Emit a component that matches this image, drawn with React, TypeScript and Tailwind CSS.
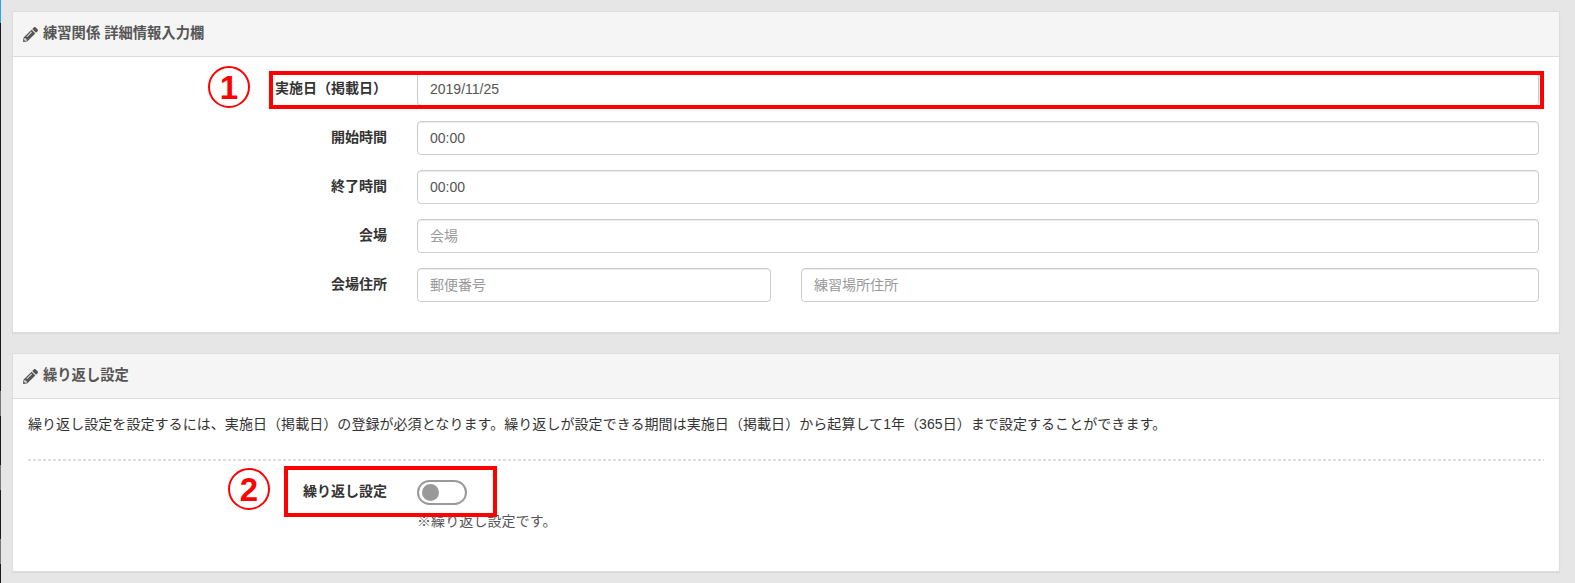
import React from "react";
import { FaPencilAlt } from "react-icons/fa";

const font = "[font-family:'Liberation_Sans','Noto_Sans_CJK_JP',sans-serif]";

function Input({ value, placeholder, className = "" }: { value?: string; placeholder?: string; className?: string }) {
  return (
    <input
      readOnly
      value={value}
      placeholder={placeholder}
      className={`h-[34px] min-w-0 rounded-[4px] border border-[#ccc] bg-white px-3 text-[14px] text-[#555] placeholder:text-[#999] shadow-[inset_0_1px_1px_rgba(0,0,0,0.075)] outline-none ${className}`}
    />
  );
}

function Row({ label, children, last }: { label: string; children: React.ReactNode; last?: boolean }) {
  return (
    <div className={`flex items-center ${last ? "" : "mb-[15px]"}`}>
      <label className="w-[374px] shrink-0 pb-[2px] text-right text-[14px] font-bold text-[#333]">{label}</label>
      <div className="ml-[30px] mr-[20px] flex flex-1 gap-[30px]">{children}</div>
    </div>
  );
}

function Panel({ title, children, className = "" }: { title: string; children: React.ReactNode; className?: string }) {
  return (
    <section className={`border border-[#ddd] bg-white shadow-[0_1px_1px_rgba(0,0,0,0.05)] ${className}`}>
      <h2 className="flex h-[45px] items-center gap-[5px] border-b border-[#ddd] bg-[#f5f5f5] pl-[10px] text-[14.3px] font-bold text-[#555]">
        <FaPencilAlt className="h-[15px] w-[15px] text-[#555]" />
        {title}
      </h2>
      {children}
    </section>
  );
}

function Mark({ n, className }: { n: string; className: string }) {
  return (
    <div className={`absolute flex h-[42px] w-[42px] items-center justify-center rounded-full border-2 border-[#f00] text-[33px] font-bold leading-none text-[#f00] ${className}`}>
      {n}
    </div>
  );
}

export default function App() {
  return (
    <div className={`relative h-[583px] w-[1575px] overflow-hidden bg-[#e6e6e6] pl-[12px] pr-[15px] pt-[11px] ${font}`}>
      <div className="absolute left-0 top-0 h-[23px] w-px bg-[#2ea3f2]" />
      <div className="absolute left-0 top-[23px] h-[560px] w-px bg-[#1a1a1a]" />
      {[391, 465, 539].map((y) => (
        <div key={y} className="absolute left-0 h-[25px] w-px bg-[#777]" style={{ top: y }} />
      ))}

      <Panel title="練習関係 詳細情報入力欄" className="h-[322px]">
        <div className="pt-[15px]">
          <Row label="実施日（掲載日）">
            <Input value="2019/11/25" className="flex-1" />
          </Row>
          <Row label="開始時間">
            <Input value="00:00" className="flex-1" />
          </Row>
          <Row label="終了時間">
            <Input value="00:00" className="flex-1" />
          </Row>
          <Row label="会場">
            <Input placeholder="会場" className="flex-1" />
          </Row>
          <Row label="会場住所" last>
            <Input placeholder="郵便番号" className="w-[354px]" />
            <Input placeholder="練習場所住所" className="flex-1" />
          </Row>
        </div>
      </Panel>

      <Panel title="繰り返し設定" className="mt-[20px] h-[219px]">
        <p className="mx-[15px] mt-[15px] text-[14px] leading-[20px] tracking-[0.06px] text-[#333]">
          繰り返し設定を設定するには、実施日（掲載日）の登録が必須となります。繰り返しが設定できる期間は実施日（掲載日）から起算して1年（365日）まで設定することができます。
        </p>
        <div className="mx-[15px] mt-[25px] h-[2px] bg-[repeating-linear-gradient(90deg,#ddd_0,#ddd_3px,transparent_3px,transparent_5px)]" />
        <div className="mt-[19px] flex items-center">
          <span className="w-[374px] pb-[2px] text-right text-[14px] font-bold text-[#333]">繰り返し設定</span>
          <span className="ml-[30px] flex h-[25px] w-[50px] items-center rounded-full border-2 border-[#999] bg-white pl-[3px]">
            <span className="h-[17px] w-[17px] rounded-full bg-[#999]" />
          </span>
        </div>
        <p className="ml-[404px] mt-[6px] text-[14px] leading-[20px] tracking-[0.1px] text-[#555]">※繰り返し設定です。</p>
      </Panel>

      <div className="absolute left-[269px] top-[71px] h-[38px] w-[1275px] border-4 border-[#f00]" />
      <div className="absolute left-[284px] top-[466px] h-[51px] w-[213px] border-4 border-[#f00]" />
      <Mark n="1" className="left-[208px] top-[66px]" />
      <Mark n="2" className="left-[228px] top-[468px]" />
    </div>
  );
}
